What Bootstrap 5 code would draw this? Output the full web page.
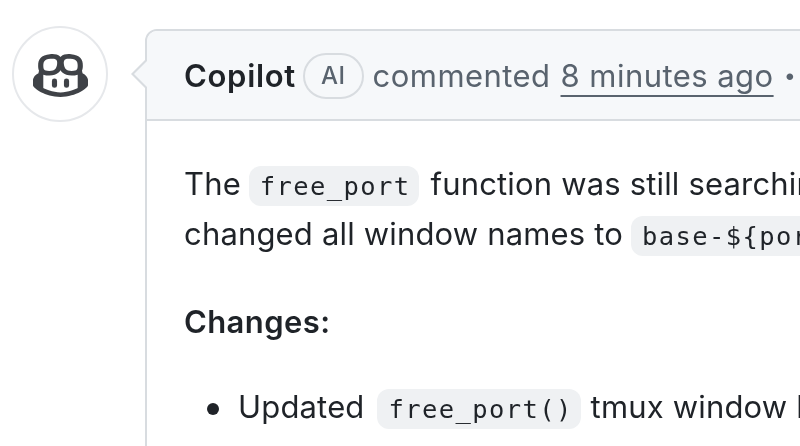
<!DOCTYPE html>
<html lang="en">
<head>
<meta charset="utf-8">
<title>Comment</title>
<link href="https://cdn.jsdelivr.net/npm/bootstrap@5.3.0/dist/css/bootstrap.min.css" rel="stylesheet">
<style>
html,body{height:446px;overflow:hidden;background:#fff}
body{font-family:Inter,"Liberation Sans",sans-serif;font-size:31px;color:#1f2328;letter-spacing:.17px}
.page-wrap{padding:26px 0 0 12px;gap:37px;width:1300px;align-items:flex-start;filter:blur(.45px)}
.avatar-disc{width:96px;height:96px;border:2px solid #e6e8eb;border-radius:50%;flex:none;background:#fff}
.comment-box{width:1100px;height:600px;margin-top:3px;border:2px solid #d8dce0;border-radius:12px;position:relative}
.comment-box::before,.comment-box::after{content:"";position:absolute;width:0;height:0;border-style:solid;border-color:transparent}
.comment-box::before{left:-16px;top:27px;border-width:16px 16px 16px 0;border-right-color:#d8dce0}
.comment-box::after{left:-13px;top:29px;border-width:14px 14px 14px 0;border-right-color:#f6f8fa}
.comment-head{height:90px;background:#f6f8fa;border-bottom:2px solid #d8dce0;border-radius:10px 10px 0 0;padding:2px 0 0 37px;color:#59636e;white-space:nowrap;letter-spacing:.45px}
.author-name{font-weight:600;color:#1f2328;letter-spacing:.7px}
.ai-tag{border:2px solid #d8dce0;border-radius:24px;font-size:24px;line-height:1;padding:9px 16px;font-weight:500;color:#59636e;margin:0 9px 0 7px;letter-spacing:.5px}
.time-link{color:#59636e;text-decoration:underline;text-underline-offset:8px;text-decoration-thickness:2px;margin:0 10px 0 10px}
.sep-dot{font-weight:800;font-size:36px;line-height:1}
.comment-body{padding:0 0 0 37px;white-space:nowrap}
.body-line{line-height:50px}
.first-line{margin-top:38px}
.inline-code{font-family:"DejaVu Sans Mono","Liberation Mono",monospace;font-size:25.5px;line-height:1;background:#eff1f3;border-radius:12px;padding:5px 8px 5px 11px;color:#1f2328;margin:0 3px 0 -1px;letter-spacing:1.4px}
.change-head{font-weight:600;margin:42px 0 43px;line-height:42px;letter-spacing:.4px}
.change-list{padding-left:54px;margin:0;line-height:42px;list-style:none}
.change-list li::before{content:"";display:inline-block;width:12px;height:12px;border-radius:50%;background:#1f2328;margin:0 19px 3px -31px}
.change-list .inline-code{margin-left:4px;margin-right:1px}
</style>
</head>
<body>
<div class="d-flex page-wrap">
  <div class="avatar-disc d-flex align-items-center justify-content-center">
    <svg width="55" height="46" viewBox="0 0 16 15.05" preserveAspectRatio="none" aria-hidden="true">
      <path fill="#3f4247" d="M7.998 15.035c-4.562 0-7.873-2.914-7.998-3.749V9.338c.085-.628.677-1.686 1.588-2.065.013-.07.024-.143.036-.218.029-.183.06-.384.126-.612-.201-.508-.254-1.084-.254-1.656 0-.87.128-1.769.693-2.484.579-.733 1.494-1.124 2.724-1.261 1.206-.134 2.262.034 2.944.765.05.053.096.108.139.165.044-.057.094-.112.143-.165.682-.731 1.738-.899 2.944-.765 1.23.137 2.145.528 2.724 1.261.566.715.693 1.614.693 2.484 0 .572-.053 1.148-.254 1.656.066.228.098.429.126.612.012.076.024.148.037.218.924.385 1.522 1.471 1.591 2.095v1.872c0 .766-3.351 3.795-8.002 3.795Zm0-1.485c2.28 0 4.584-1.11 5.002-1.433V7.862l-.023-.116c-.49.21-1.075.291-1.727.291-1.146 0-2.059-.327-2.71-.991A3.222 3.222 0 0 1 8 6.303a3.24 3.24 0 0 1-.544.743c-.65.664-1.563.991-2.71.991-.652 0-1.236-.081-1.727-.291l-.023.116v4.255c.419.323 2.722 1.433 5.002 1.433ZM6.762 2.83c-.193-.206-.637-.413-1.682-.297-1.019.113-1.479.404-1.713.7-.247.312-.369.789-.369 1.554 0 .793.129 1.171.308 1.371.162.181.519.379 1.442.379.853 0 1.339-.235 1.638-.54.315-.322.527-.827.617-1.553.117-.935-.037-1.395-.241-1.614Zm4.155-.297c-1.044-.116-1.488.091-1.681.297-.204.219-.359.679-.242 1.614.091.726.303 1.231.618 1.553.299.305.784.54 1.638.54.922 0 1.28-.198 1.442-.379.179-.2.308-.578.308-1.371 0-.765-.123-1.242-.37-1.554-.233-.296-.693-.587-1.713-.7Z"/>
      <path fill="#3f4247" d="M6.25 9.037a.75.75 0 0 1 .75.75v1.501a.75.75 0 0 1-1.5 0V9.787a.75.75 0 0 1 .75-.75Zm4.25.75v1.501a.75.75 0 0 1-1.5 0V9.787a.75.75 0 0 1 1.5 0Z"/>
    </svg>
  </div>
  <div class="comment-box">
    <div class="comment-head d-flex align-items-center">
      <span class="author-name">Copilot</span><span class="ai-tag">AI</span><span>commented</span><a class="time-link" href="#">8 minutes ago</a><span class="sep-dot">·</span>
    </div>
    <div class="comment-body">
      <div class="body-line first-line">The <code class="inline-code">free_port</code> function was still searching for the old</div>
      <div class="body-line">changed all window names to <code class="inline-code">base-${port}</code> so the lookup works.</div>
      <p class="change-head">Changes:</p>
      <ul class="change-list">
        <li>Updated <code class="inline-code">free_port()</code> tmux window lookup</li>
      </ul>
    </div>
  </div>
</div>
</body>
</html>
